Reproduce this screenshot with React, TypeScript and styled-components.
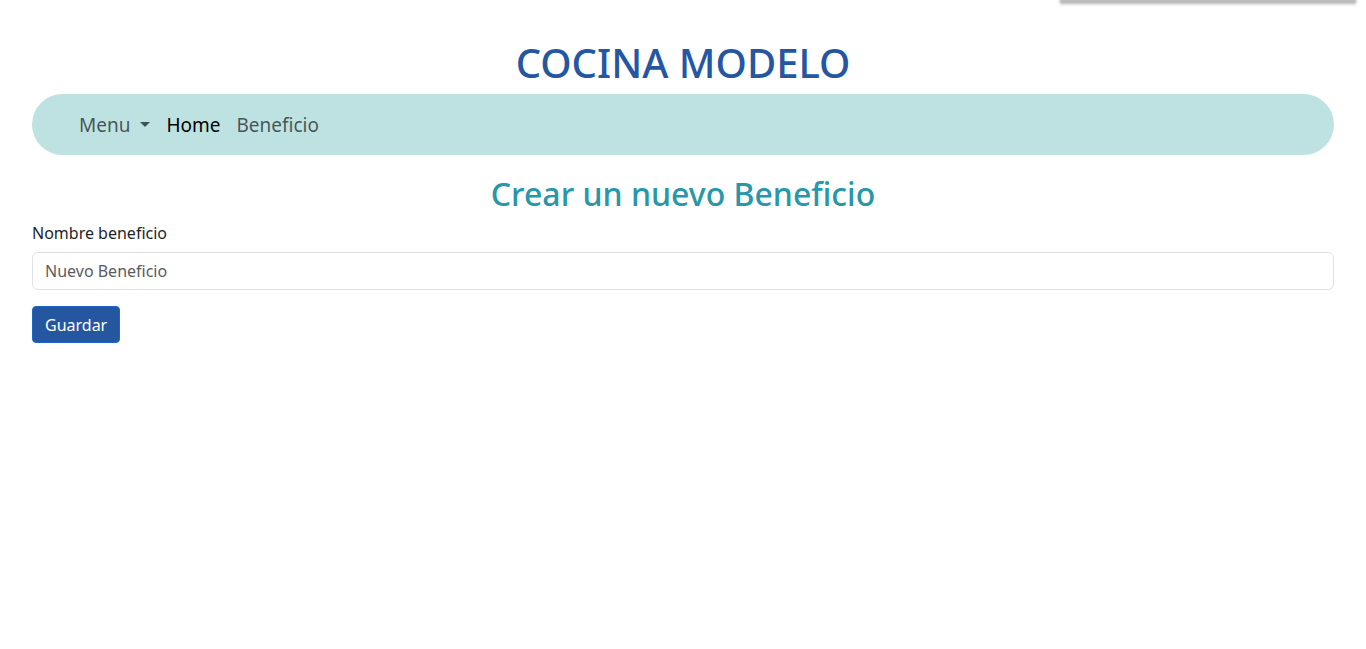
import React from 'react';
import styled, { createGlobalStyle } from 'styled-components';

const GlobalStyle = createGlobalStyle`
  * { box-sizing: border-box; }
  body {
    margin: 0;
    font-family: "Noto Sans", "Open Sans", sans-serif;
    color: #212529;
    background: #fff;
  }
`;

const ShadowBar = styled.div`
  position: fixed;
  top: -10px;
  left: 1061px;
  width: 294px;
  height: 13px;
  background: #bcbcbc;
  box-shadow: 0 0 3px 1px rgba(160, 160, 160, 0.8);
`;

const Page = styled.div`
  padding: 0 32px;
`;

const Title = styled.h1`
  margin: 39px 0 7px;
  text-align: center;
  font-size: 40px;
  font-weight: 500;
  line-height: 1.2;
  color: #2456a2;
`;

const Navbar = styled.nav`
  height: 61px;
  border-radius: 31px;
  background: #bee2e2;
  display: flex;
  align-items: center;
  padding-left: 47px;
  gap: 16px;
`;

const NavLink = styled.a<{ $active?: boolean }>`
  font-size: 19px;
  color: ${(p) => (p.$active ? '#000' : 'rgba(0, 0, 0, 0.65)')};
  text-decoration: none;
  display: flex;
  align-items: center;
  cursor: pointer;
`;

const Caret = styled.span`
  display: inline-block;
  margin-left: 10px;
  border-top: 5px solid rgba(0, 0, 0, 0.65);
  border-left: 5px solid transparent;
  border-right: 5px solid transparent;
`;

const Heading = styled.h2`
  margin: 20px 0 9px;
  text-align: center;
  font-size: 32px;
  font-weight: 500;
  line-height: 1.2;
  color: #2797a9;
`;

const Label = styled.label`
  display: block;
  font-size: 16px;
  margin-bottom: 8px;
`;

const Input = styled.input`
  display: block;
  width: 100%;
  height: 38px;
  padding: 6px 12px;
  font-family: inherit;
  font-size: 16px;
  color: #212529;
  border: 1px solid #dee2e6;
  border-radius: 6px;
  margin-bottom: 16px;
  &::placeholder { color: #595c5f; }
`;

const Button = styled.button`
  height: 37px;
  padding: 0 12px;
  font-family: inherit;
  font-size: 16px;
  color: #fff;
  background: #2557a0;
  border: 1px solid #1f66c7;
  border-radius: 4px;
  cursor: pointer;
`;

export default function App() {
  return (
    <>
      <GlobalStyle />
      <ShadowBar />
      <Page>
        <Title>COCINA MODELO</Title>
        <Navbar>
          <NavLink>
            Menu
            <Caret />
          </NavLink>
          <NavLink $active>Home</NavLink>
          <NavLink>Beneficio</NavLink>
        </Navbar>
        <Heading>Crear un nuevo Beneficio</Heading>
        <form onSubmit={(e) => e.preventDefault()}>
          <Label htmlFor="nombre">Nombre beneficio</Label>
          <Input id="nombre" type="text" placeholder="Nuevo Beneficio" />
          <Button type="submit">Guardar</Button>
        </form>
      </Page>
    </>
  );
}
